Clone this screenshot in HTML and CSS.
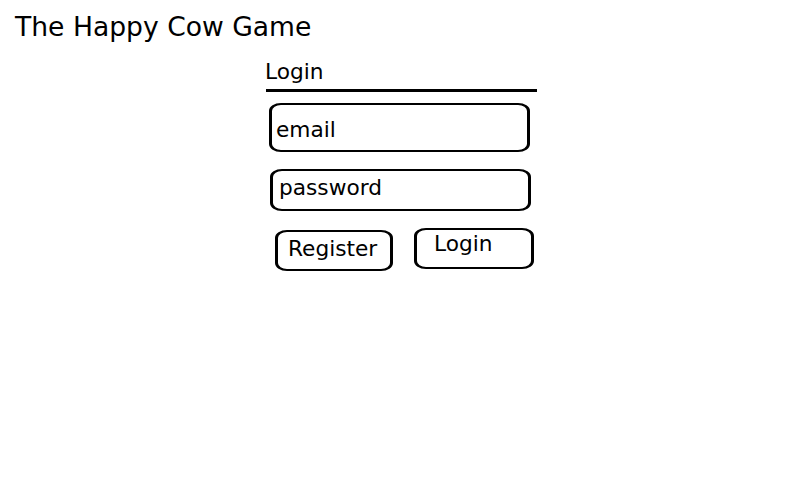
FILE: index.html
```html
<!DOCTYPE html>
<html lang="en">
<head>
<meta charset="utf-8">
<title>The Happy Cow Game</title>
<link rel="stylesheet" href="styles.css">
</head>
<body>
<h1 class="title">The Happy Cow Game</h1>
<form class="login">
  <div class="label">Login</div>
  <div class="rule"></div>
  <div class="field field-email">email</div>
  <div class="field field-password">password</div>
  <div class="actions">
    <div class="btn btn-register">Register</div>
    <div class="btn btn-login">Login</div>
  </div>
</form>
</body>
</html>
```
FILE: styles.css
```css
html, body {
  margin: 0;
  padding: 0;
  background: #fff;
}
body {
  font-family: "DejaVu Sans", sans-serif;
  color: #000;
  width: 798px;
  height: 487px;
  overflow: hidden;
}
.title {
  margin: 12px 0 0 0;
  padding-left: 15px;
  font-size: 26.6px;
  font-weight: normal;
  line-height: 30px;
}
.login {
  margin: 18px 0 0 265px;
  display: flex;
  flex-direction: column;
  align-items: flex-start;
  font-size: 21.7px;
  line-height: 24px;
}
.label {
  height: 24px;
}
.rule {
  margin: 5px 0 0 1px;
  width: 271px;
  height: 3px;
  background: #000;
}
.field, .btn {
  box-sizing: border-box;
  border: solid #000;
  border-width: 2.5px 3px;
  border-radius: 12px / 8px;
}
.field-email {
  margin: 11px 0 0 4px;
  width: 261px;
  height: 49px;
  padding: 13px 0 0 4px;
}
.field-password {
  margin: 17px 0 0 5px;
  width: 261px;
  height: 42px;
  padding: 5px 0 0 6px;
}
.actions {
  margin: 17px 0 0 10px;
  display: flex;
  align-items: flex-start;
  gap: 21px;
}
.btn-register {
  margin-top: 2px;
  width: 118px;
  height: 41px;
  padding: 5px 0 0 10px;
}
.btn-login {
  width: 120px;
  height: 41px;
  padding: 2px 0 0 17px;
}
```
